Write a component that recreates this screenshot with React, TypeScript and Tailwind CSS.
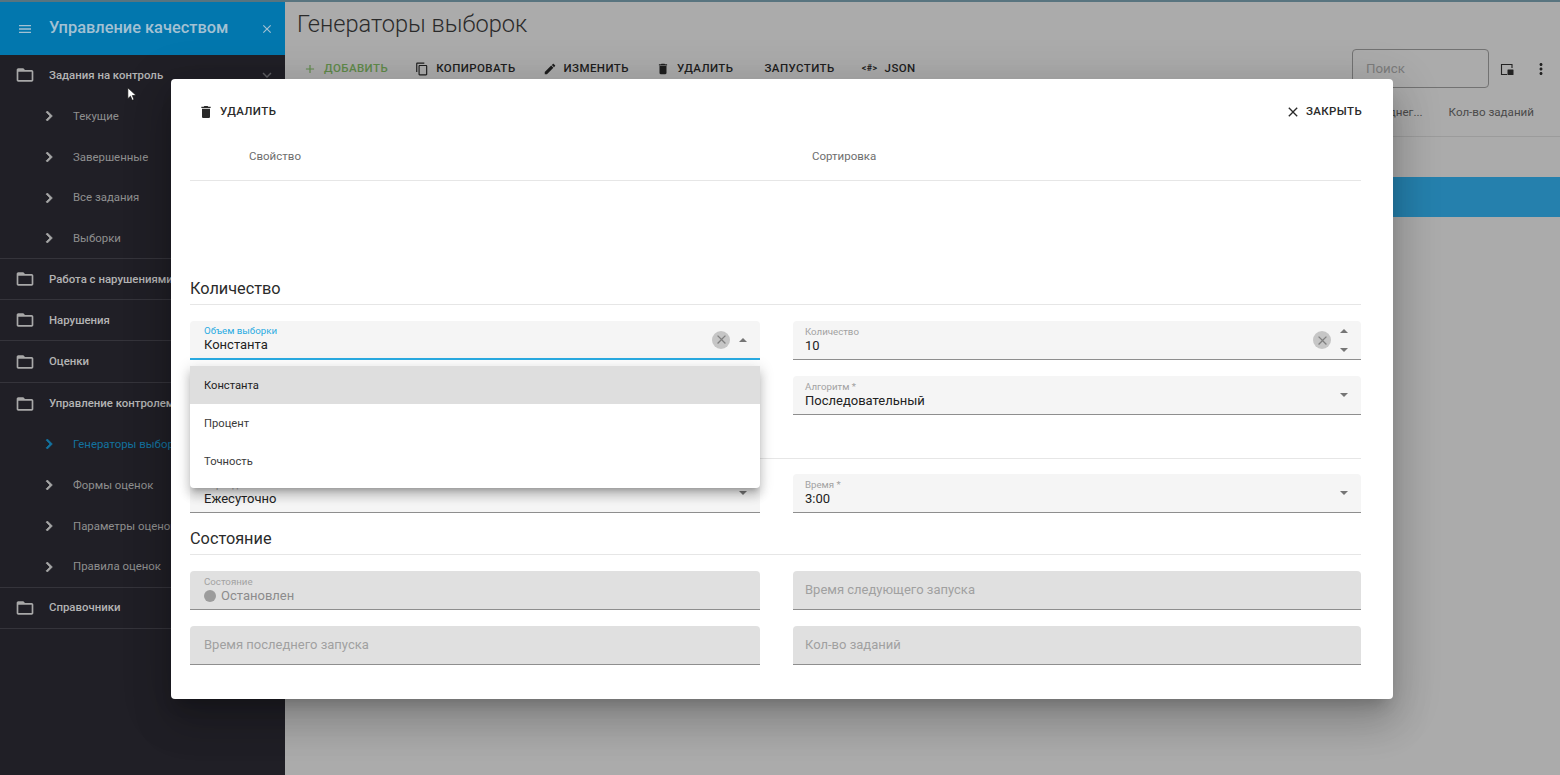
import React from "react";

const P = {
  folder: "M20 6h-8l-2-2H4c-1.1 0-1.99.9-1.99 2L2 18c0 1.1.9 2 2 2h16c1.1 0 2-.9 2-2V8c0-1.1-.9-2-2-2zm0 12H4V8h16v10z",
  trash: "M6 19c0 1.1.9 2 2 2h8c1.1 0 2-.9 2-2V7H6v12zM19 4h-3.5l-1-1h-5l-1 1H5v2h14V4z",
  copy: "M16 1H4c-1.1 0-2 .9-2 2v14h2V3h12V1zm3 4H8c-1.1 0-2 .9-2 2v14c0 1.1.9 2 2 2h11c1.1 0 2-.9 2-2V7c0-1.1-.9-2-2-2zm0 16H8V7h11v14z",
  edit: "M3 17.25V21h3.75L17.81 9.94l-3.75-3.75L3 17.25zM20.71 7.04c.39-.39.39-1.02 0-1.41l-2.34-2.34c-.39-.39-1.02-.39-1.41 0l-1.83 1.83 3.75 3.75 1.83-1.83z",
  close: "M19 6.41L17.59 5 12 10.59 6.41 5 5 6.41 10.59 12 5 17.59 6.41 19 12 13.41 17.59 19 19 17.59 13.41 12z",
  plus: "M19 13h-6v6h-2v-6H5v-2h6V5h2v6h6v2z",
  menu: "M3 18h18v-2H3v2zm0-5h18v-2H3v2zm0-7v2h18V6H3z",
  right: "M10 6L8.59 7.41 13.17 12l-4.58 4.59L10 18l6-6z",
  down: "M16.59 8.59L12 13.17 7.41 8.59 6 10l6 6 6-6z",
  more: "M12 8c1.1 0 2-.9 2-2s-.9-2-2-2-2 .9-2 2 .9 2 2 2zm0 2c-1.1 0-2 .9-2 2s.9 2 2 2 2-.9 2-2-.9-2-2-2zm0 6c-1.1 0-2 .9-2 2s.9 2 2 2 2-.9 2-2-.9-2-2-2z",
};

function Icon({ d, className, bold }: { d: string; className: string; bold?: boolean }) {
  return (
    <svg viewBox="0 0 24 24" fill="currentColor" stroke={bold ? "currentColor" : "none"} strokeWidth={bold ? 0.9 : 0} className={className}>
      <path d={d} />
    </svg>
  );
}

function Group({ label, border, chevron, h }: { label: string; border?: boolean; chevron?: boolean; h: string }) {
  return (
    <div className={`${h} shrink-0 flex items-center pl-[14.5px] pr-[9px] whitespace-nowrap ${border ? "border-b border-[#35343b]" : ""}`}>
      <Icon d={P.folder} className="w-5 h-5 text-[#a8a8a8] shrink-0" />
      <span className="ml-[14.5px] text-[11.4px] font-medium text-[#b4b4b4] grow">{label}</span>
      {chevron && <Icon d={P.down} className="w-[18px] h-[18px] text-[#5e5e62]" />}
    </div>
  );
}

function Child({ label, active, border, h }: { label: string; active?: boolean; border?: boolean; h: string }) {
  return (
    <div className={`${h} shrink-0 flex items-center pl-[39px] whitespace-nowrap ${border ? "border-b border-[#35343b]" : ""}`}>
      <Icon d={P.right} bold className={`w-5 h-5 shrink-0 ${active ? "text-[#13729f]" : "text-[#a6a6a6]"}`} />
      <span className={`ml-[14px] text-[11.4px] ${active ? "text-[#13729f]" : "text-[#8f8f8f]"}`}>{label}</span>
    </div>
  );
}

function Sidebar() {
  return (
    <aside className="w-[285px] shrink-0 bg-[#201f26] flex flex-col overflow-hidden">
      <div className="h-[53px] shrink-0 bg-[#0277ae] flex items-center pl-[17px] pr-[11px] text-[#a3c1d3]">
        <Icon d={P.menu} className="w-4 h-4" />
        <span className="ml-[16px] text-[16.4px] font-medium grow">Управление качеством</span>
        <Icon d={P.close} className="w-[14px] h-[14px]" />
      </div>
      <Group h="h-[40.9px]" label="Задания на контроль" chevron />
      <Child h="h-[40.8px]" label="Текущие" />
      <Child h="h-[40.8px]" label="Завершенные" />
      <Child h="h-[40.8px]" label="Все задания" />
      <Child h="h-[40.8px]" label="Выборки" border />
      <Group h="h-[41px]" label="Работа с нарушениями" border />
      <Group h="h-[41px]" label="Нарушения" border />
      <Group h="h-[42px]" label="Оценки" border />
      <Group h="h-[40.9px]" label="Управление контролем" />
      <Child h="h-[40.9px]" label="Генераторы выборок" active />
      <Child h="h-[40.9px]" label="Формы оценок" />
      <Child h="h-[40.9px]" label="Параметры оценок" />
      <Child h="h-[40.9px]" label="Правила оценок" border />
      <Group h="h-[41.5px]" label="Справочники" border />
    </aside>
  );
}

function ToolButton({ icon, label, className }: { icon?: React.ReactNode; label: string; className?: string }) {
  return (
    <div className={`flex items-center gap-[7px] text-[11.5px] font-medium tracking-[0.42px] whitespace-nowrap ${className ?? "text-[#1e1e1e]"}`}>
      {icon}
      <span>{label}</span>
    </div>
  );
}

function Main() {
  return (
    <main className="grow min-w-0 flex flex-col bg-[#ababab]">
      <h1 className="h-[46px] shrink-0 pl-[12px] pt-[6px] text-[23.6px] leading-[32px] font-light text-[#2a2a2a]">Генераторы выборок</h1>
      <div className="h-[41px] shrink-0 flex items-center pl-[18px] pr-[10px] gap-[27px]">
        <ToolButton className="text-[#5f8a4a]" icon={<Icon d={P.plus} className="w-[14px] h-[14px]" />} label="ДОБАВИТЬ" />
        <ToolButton icon={<Icon d={P.copy} className="w-[14px] h-[14px]" />} label="КОПИРОВАТЬ" />
        <ToolButton icon={<Icon d={P.edit} className="w-[14px] h-[14px]" />} label="ИЗМЕНИТЬ" />
        <ToolButton icon={<Icon d={P.trash} className="w-[14px] h-[14px]" />} label="УДАЛИТЬ" />
        <ToolButton className="ml-[4px] text-[#1e1e1e]" label="ЗАПУСТИТЬ" />
        <ToolButton icon={<span className="text-[9px] font-bold">{"<#>"}</span>} label="JSON" />
        <div className="ml-auto flex items-center">
          <div className="w-[137px] h-[39px] border border-[#727272] rounded-[4px] flex items-center pl-[13px] text-[13.3px] text-[#7c7c7c]">Поиск</div>
          <svg viewBox="0 0 16 16" className="ml-[10px] w-[16px] h-[16px] text-[#222]" fill="none">
            <path d="M13 7V3.5H2.5v10H8" stroke="currentColor" strokeWidth="1.1" />
            <rect x="8.5" y="8.5" width="6" height="5.5" fill="currentColor" rx="0.5" />
          </svg>
          <Icon d={P.more} className="ml-[17px] w-[18px] h-[18px] text-[#222]" />
        </div>
      </div>
      <div className="h-[48px] shrink-0 border-b border-[#9b9b9b] flex items-center justify-end pr-[26px] gap-[26px] text-[11.6px] text-[#4a4a4a]">
        <span>Среднег...</span>
        <span>Кол-во заданий</span>
      </div>
      <div className="h-[40px] mt-[40px] shrink-0 bg-[#2580ad]" />
    </main>
  );
}

function Triangle({ up }: { up?: boolean }) {
  return (
    <svg viewBox="0 0 10 5" className="w-[8px] h-[4px]" fill="#757575">
      <path d={up ? "M0 5L5 0l5 5z" : "M0 0l5 5 5-5z"} />
    </svg>
  );
}

function Clear() {
  return (
    <div className="w-[18px] h-[18px] rounded-full bg-[#c6c6c6] flex items-center justify-center">
      <Icon d={P.close} className="w-[15px] h-[15px] text-[#808080]" />
    </div>
  );
}

function Field({
  label, value, focused, clear, arrow, spin, disabled, col2, children,
}: {
  label?: string; value?: string; focused?: boolean; clear?: boolean; arrow?: "up" | "down"; spin?: boolean; disabled?: boolean; col2?: boolean; children?: React.ReactNode;
}) {
  const bg = disabled ? "bg-[#e0e0e0]" : "bg-[#f5f5f5]";
  const line = focused ? "border-b-2 border-[#29abe2]" : "border-b border-[#8e8e8e]";
  return (
    <div className={`h-[39px] rounded-t-[4px] flex items-center pr-[13px] ${col2 ? "pl-[12px]" : "pl-[14px]"} ${bg} ${line}`}>
      <div className="grow min-w-0">
        {value !== undefined || children ? (
          <div className="pb-[1px]">
            <div className={`text-[9.7px] leading-[12px] ${focused ? "text-[#29abe2]" : "text-[#a2a2a2]"}`}>{label}</div>
            {children ?? <div className="text-[13px] leading-[16px] text-[#222]">{value}</div>}
          </div>
        ) : (
          <div className="pb-[1px] text-[13px] leading-[17px] text-[#a0a0a0]">{label}</div>
        )}
      </div>
      {clear && <div className="mr-[9px]"><Clear /></div>}
      {arrow && <Triangle up={arrow === "up"} />}
      {spin && (
        <div className="flex flex-col gap-[15px]">
          <Triangle up />
          <Triangle />
        </div>
      )}
    </div>
  );
}

function Section({ title, className }: { title?: string; className: string }) {
  return (
    <div className={`border-b border-[#e6e6e6] flex items-center text-[16.3px] text-[#2b2b2b] ${className}`}>{title}</div>
  );
}

function Row({ children, className }: { children: React.ReactNode; className?: string }) {
  return <div className={`grid grid-cols-[570px_568px] gap-x-[33px] ${className ?? ""}`}>{children}</div>;
}

function Dialog() {
  return (
    <div className="absolute left-[171px] top-[79px] w-[1222px] h-[620px] rounded-[4px] bg-white pl-[19px] pr-[32px] flex flex-col shadow-[0_11px_15px_-7px_rgba(0,0,0,0.2),0_24px_38px_3px_rgba(0,0,0,0.14),0_9px_46px_8px_rgba(0,0,0,0.12)]">
      <div className="h-[64px] shrink-0 pt-[1px] flex items-center justify-between text-[11.5px] font-medium tracking-[0.38px] text-[#2a2a2a]">
        <div className="flex items-center pl-[8px] gap-[6px]">
          <Icon d={P.trash} className="w-[16px] h-[16px]" />
          <span>УДАЛИТЬ</span>
        </div>
        <div className="flex items-center gap-[5px] -mr-[1px]">
          <Icon d={P.close} className="w-[16px] h-[16px]" />
          <span>ЗАКРЫТЬ</span>
        </div>
      </div>
      <div className="h-[38px] shrink-0 border-b border-[#e6e6e6] flex pl-[59px] text-[11.5px] leading-[26px] text-[#6e6e6e]">
        <span className="w-[563px]">Свойство</span>
        <span>Сортировка</span>
      </div>
      <div className="h-[91px] shrink-0" />
      <Section title="Количество" className="h-[33px] shrink-0 pt-[2px]" />
      <Row className="mt-[16px]">
        <Field label="Объем выборки" value="Константа" focused clear arrow="up" />
        <Field col2 label="Количество" value="10" clear spin />
      </Row>
      <Row className="mt-[16px]">
        <Field />
        <Field col2 label="Алгоритм *" value="Последовательный" arrow="down" />
      </Row>
      <Section className="h-[44px] shrink-0" />
      <Row className="mt-[15px]">
        <Field label="Периодичность *" value="Ежесуточно" arrow="down" />
        <Field col2 label="Время *" value="3:00" arrow="down" />
      </Row>
      <Section title="Состояние" className="h-[42px] shrink-0 pt-[12px]" />
      <Row className="mt-[16px]">
        <Field label="Состояние" disabled>
          <div className="flex items-center gap-[5px] text-[13px] leading-[16px] text-[#8c8c8c]">
            <span className="w-[12px] h-[12px] rounded-full bg-[#9c9c9c]" />
            <span>Остановлен</span>
          </div>
        </Field>
        <Field col2 label="Время следующего запуска" disabled />
      </Row>
      <Row className="mt-[16px]">
        <Field label="Время последнего запуска" disabled />
        <Field col2 label="Кол-во заданий" disabled />
      </Row>
      <div className="absolute left-[19px] top-[287px] w-[570px] h-[122px] bg-white rounded-b-[4px] text-[11.2px] text-[#3a3a3a] shadow-[0_5px_5px_-3px_rgba(0,0,0,0.2),0_8px_10px_1px_rgba(0,0,0,0.14),0_3px_14px_2px_rgba(0,0,0,0.12)]">
        <div className="h-[38px] pt-[2px] flex items-center pl-[14px] bg-[#dedede] text-[#222]">Константа</div>
        <div className="h-[38px] pt-[2px] flex items-center pl-[14px]">Процент</div>
        <div className="h-[38px] pt-[2px] flex items-center pl-[14px]">Точность</div>
      </div>
    </div>
  );
}

export default function App() {
  return (
    <div className="relative w-[1560px] h-[775px] overflow-hidden flex flex-col font-['Roboto',sans-serif] bg-[#ababab]">
      <div className="h-[2px] shrink-0 bg-[#58747f]" />
      <div className="flex grow min-h-0">
        <Sidebar />
        <Main />
      </div>
      <Dialog />
      <svg viewBox="0 0 12 18" className="absolute left-[127px] top-[87px] w-[10px] h-[15px]">
        <path d="M1 1v13l3.2-3 2 5 2.2-1-2-4.8H11z" fill="#fff" stroke="#111" strokeWidth="0.8" />
      </svg>
    </div>
  );
}
